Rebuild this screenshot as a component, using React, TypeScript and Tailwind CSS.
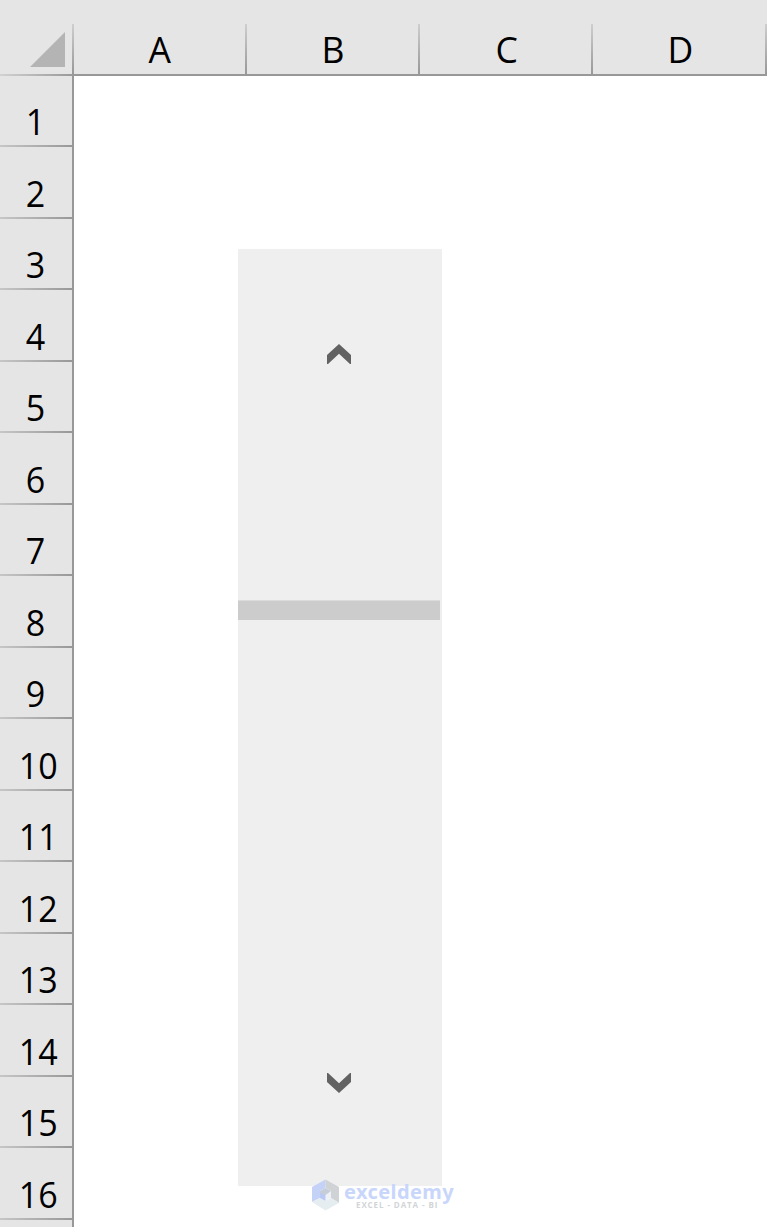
const COLUMNS = ["A", "B", "C", "D"];
const ROWS = Array.from({ length: 16 }, (_, i) => i + 1);

function SelectAllCorner() {
  return (
    <div className="flex h-full w-[73.5px] shrink-0 flex-col">
      <div className="flex flex-1 items-end justify-end">
        <svg className="mr-[7px] mb-[7px] h-[35px] w-[35px]" viewBox="0 0 35 35">
          <path d="M35 0V35H0Z" fill="#b4b4b4" />
        </svg>
        <div className="h-[50px] w-0.5 bg-linear-to-b from-[#cecece] to-[#989898]" />
      </div>
      <div className="h-0.5 bg-linear-to-r from-[#d2d2d2] to-[#989898]" />
    </div>
  );
}

function ColumnHeader({ label }: { label: string }) {
  return (
    <div className="flex h-full w-[173.3px] shrink-0 flex-col">
      <div className="flex flex-1 items-end">
        <div className="flex h-[50px] flex-1 items-center justify-center pb-0.5 pl-0.5 text-[37px] leading-none">
          <span className="scale-x-[0.96]">{label}</span>
        </div>
        <div className="h-[50px] w-0.5 bg-linear-to-b from-[#cecece] to-[#989898]" />
      </div>
      <div className="h-0.5 bg-[#989898]" />
    </div>
  );
}

function RowHeader({ row }: { row: number }) {
  return (
    <div className="flex h-[71.5px] shrink-0 flex-col first:h-[71px]">
      <div
        className={`flex flex-1 items-end justify-center pb-[6px] text-[37px] leading-none ${
          row > 9 ? "pl-1" : ""
        }`}
      >
        <span className="scale-x-[0.92]">{row}</span>
      </div>
      <div className="h-0.5 bg-linear-to-r from-[#c6c6c6] to-[#989898]" />
    </div>
  );
}

function ScrollBar() {
  return (
    <div className="absolute top-[249px] left-[238px] flex h-[937px] w-[204px] flex-col bg-[#efefef]">
      <div className="flex h-[351px] justify-center pt-[95px] pr-[2px]">
        <svg className="h-5 w-6" viewBox="0 0 24 20" fill="#626262">
          <path d="M12 0L24 11V20H23L12 9.8L1 20H0V11Z" />
        </svg>
      </div>
      <div className="h-5 w-[202px] border-t border-[#dcdcdc] bg-[#cccccc]" />
      <div className="flex flex-1 items-end justify-center pr-[2px] pb-[93px]">
        <svg className="h-5 w-6" viewBox="0 0 24 20" fill="#626262">
          <path d="M12 20L24 9V0H23L12 10.2L1 0H0V9Z" />
        </svg>
      </div>
    </div>
  );
}

function Watermark() {
  return (
    <div className="absolute top-[1179px] left-[311px] flex">
      <svg className="h-[32px] w-[29px]" viewBox="0 0 29 32">
        <path d="M14.5 0.5L1 8V23L9 19V12L14.5 9Z" fill="#c5d2f7" />
        <path d="M14.5 0.5L28 8V24L20 19V12L14.5 9Z" fill="#d0d3d6" />
        <path d="M1 23L9 19L14.5 22L20 19L28 24L14.5 31.5Z" fill="#e6edf0" />
        <path d="M9 12L14.5 9L20 12V19L14.5 16L9 19Z" fill="#c5cdd9" />
        <path d="M14.5 16L20 12V19L14.5 22Z" fill="#edf0f4" />
        <path d="M9 14L14.5 16V22L9 19Z" fill="#b9c9f4" />
      </svg>
      <div className="ml-[4px] flex flex-col pt-[3px] whitespace-nowrap">
        <span className="font-['Noto_Sans',sans-serif] text-[20px] leading-[20px] font-bold tracking-[0.4px] text-[#c9d6fb]">
          exceldemy
        </span>
        <span className="-mt-px ml-[12px] text-[8px] leading-[8px] font-bold tracking-[0.9px] text-[#d2d5d8]">
          EXCEL - DATA - BI
        </span>
      </div>
    </div>
  );
}

export default function App() {
  return (
    <div className="relative flex h-[1227px] w-[767px] flex-col overflow-hidden bg-white font-['Open_Sans','Noto_Sans',sans-serif] text-black">
      <div className="flex h-[76px] shrink-0 bg-[#e5e5e5]">
        <SelectAllCorner />
        {COLUMNS.map((label) => (
          <ColumnHeader key={label} label={label} />
        ))}
      </div>
      <div className="flex min-h-0 flex-1">
        <div className="flex w-[73.5px] flex-col border-r-2 border-[#989898] bg-[#e5e5e5]">
          {ROWS.map((row) => (
            <RowHeader key={row} row={row} />
          ))}
        </div>
        <div className="flex-1 bg-white" />
      </div>
      <ScrollBar />
      <Watermark />
    </div>
  );
}
